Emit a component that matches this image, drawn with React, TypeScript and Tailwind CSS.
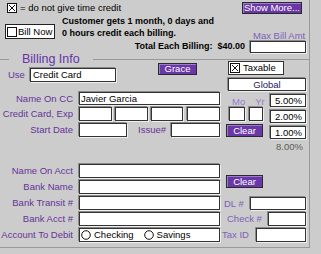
import type { ReactNode } from 'react';

function XBox({ checked = true }: { checked?: boolean }) {
  return (
    <svg width="10" height="10" viewBox="0 0 10 10" className="shrink-0">
      <rect x="0.5" y="0.5" width="9" height="9" fill="white" stroke="#111" />
      {checked && <path d="M2 2L8 8M8 2L2 8" stroke="#111" strokeWidth="1" />}
    </svg>
  );
}

function Radio() {
  return (
    <svg width="10" height="10" viewBox="0 0 10 10" className="shrink-0">
      <circle cx="5" cy="5" r="4.3" fill="white" stroke="#111" strokeWidth="1" />
    </svg>
  );
}

// white inset field
function Box({ className = '', children }: { className?: string; children?: ReactNode }) {
  return (
    <div
      className={`flex shrink-0 items-center overflow-hidden whitespace-nowrap border border-[#333] bg-white shadow-[-1px_-1px_0_#8a8a8a,1px_1px_0_#eeeeee] ${className}`}
    >
      {children}
    </div>
  );
}

function Btn({ className = '', children }: { className?: string; children: ReactNode }) {
  return (
    <div
      className={`flex shrink-0 items-center justify-center border border-[#2a2a2a] bg-[#6a36a8] text-white shadow-[inset_1px_1px_0_#9a7ccc] ${className}`}
    >
      {children}
    </div>
  );
}

function Row({ label, children, className = '' }: { label: string; children: ReactNode; className?: string }) {
  return (
    <div className={`flex h-[14px] items-center ${className}`}>
      <span className="w-[73px] shrink-0 whitespace-nowrap text-right text-[#663399]">{label}</span>
      <div className="ml-[6px] flex h-full items-center">{children}</div>
    </div>
  );
}

export default function App() {
  return (
    <div className="h-[254px] w-[321px] overflow-hidden bg-[#cccccc] font-['Liberation_Sans',Arial,sans-serif] text-[9.5px] leading-[12px] text-black">
      <div className="h-[248px] w-[310px] border-r border-b border-[#999]">
        {/* Top */}
        <div className="h-[52px]">
          <div className="flex h-[15px] items-start justify-between">
            <div className="ml-[7px] mt-[2px] flex h-[12px] items-center">
              <XBox />
              <span className="ml-[3px] whitespace-nowrap">= do not give time credit</span>
            </div>
            <Btn className="mr-[7px] mt-[2px] h-[12px] w-[60px]">Show More...</Btn>
          </div>
          <div className="flex">
            <div className="w-[248px]">
              <div className="flex">
                <div className="ml-[5px] mt-[9px] flex h-[15px] w-[50px] items-center border border-[#222] bg-white pl-[1px]">
                  <XBox checked={false} />
                  <span className="ml-[1px] whitespace-nowrap">Bill Now</span>
                </div>
                <div className="ml-[7px] whitespace-nowrap text-[9px] font-bold leading-[12px]">
                  Customer gets 1 month, 0 days and
                  <br />0 hours credit each billing.
                </div>
              </div>
              <div className="mt-[1px] whitespace-nowrap pr-[3px] text-right text-[9px] font-bold leading-[12px]">
                Total Each Billing:&nbsp; $40.00
              </div>
            </div>
            <div className="w-[61px]">
              <div className="ml-[5px] mt-[15px] whitespace-nowrap leading-[11px] text-[#8060b8]">Max Bill Amt</div>
              <Box className="ml-[2px] h-[12px] w-[56px]" />
            </div>
          </div>
        </div>

        {/* Billing Info header */}
        <div className="flex h-[14px] items-center">
          <div className="w-[9px] border-t border-[#999]" />
          <span className="mx-[13px] whitespace-nowrap text-[12.5px] leading-[14px] text-[#6633aa]">Billing Info</span>
          <div className="flex-1 border-t border-[#999]" />
        </div>

        <div className="-mt-[5px] flex">
          {/* Left column */}
          <div className="w-[222px]">
            <div className="flex h-[21px] items-start">
              <div className="mt-[7px] flex h-[14px] items-center">
                <span className="ml-[8px] w-[22px] text-[#663399]">Use</span>
                <Box className="h-[14px] w-[86px] pl-[2px]">Credit Card</Box>
              </div>
              <Btn className="ml-[42px] mt-[2px] h-[12px] w-[39px]">Grace</Btn>
            </div>

            <Row label="Name On CC" className="mt-[10px] !h-[13px]">
              <Box className="h-[13px] w-[141px] pl-[1px]">Javier Garcia</Box>
            </Row>
            <Row label="Credit Card, Exp" className="mt-[2px]">
              <Box className="h-[14px] w-[33px]" />
              <Box className="ml-[3px] h-[14px] w-[33px]" />
              <Box className="ml-[3px] h-[14px] w-[32px]" />
              <Box className="ml-[4px] h-[14px] w-[33px]" />
            </Row>
            <Row label="Start Date" className="mt-[2px]">
              <Box className="h-[14px] w-[48px]" />
              <span className="ml-[11px] w-[33px] text-[#663399]">Issue#</span>
              <Box className="h-[14px] w-[49px]" />
            </Row>

            <Row label="Name On Acct" className="mt-[27px]">
              <Box className="h-[14px] w-[141px]" />
            </Row>
            <Row label="Bank Name" className="mt-[2px]">
              <Box className="h-[14px] w-[141px]" />
            </Row>
            <Row label="Bank Transit #" className="mt-[2px]">
              <Box className="h-[14px] w-[141px]" />
            </Row>
            <Row label="Bank Acct #" className="mt-[2px]">
              <Box className="h-[14px] w-[141px]" />
            </Row>
            <Row label="Account To Debit" className="mt-[2px]">
              <Box className="h-[14px] w-[141px] pl-[1px]">
                <Radio />
                <span className="ml-[3px]">Checking</span>
                <span className="ml-[10px] flex items-center">
                  <Radio />
                  <span className="ml-[3px]">Savings</span>
                </span>
              </Box>
            </Row>
          </div>

          {/* Right column */}
          <div className="w-[87px]">
            <div className="ml-[6px] flex h-[14px] w-[56px] items-center border border-[#333] bg-white pl-[1px]">
              <XBox />
              <span className="ml-[3px]">Taxable</span>
            </div>
            <Box className="ml-[6px] mt-[3px] h-[13px] w-[78px] justify-center text-[#1c1c5a]">Global</Box>

            <div className="mt-[3px] flex h-[59px]">
              <div className="w-[48px]">
                <div className="flex h-[13px] pt-[2px] leading-[11px] text-[#9a7acc]">
                  <span className="ml-[10px]">Mo</span>
                  <span className="ml-[10px]">Yr</span>
                </div>
                <div className="flex h-[14px]">
                  <Box className="ml-[7px] h-[14px] w-[16px]" />
                  <Box className="ml-[4px] h-[14px] w-[14px]" />
                </div>
                <Btn className="ml-[4px] mt-[3px] h-[13px] w-[37px]">Clear</Btn>
              </div>
              <div className="w-[36px]">
                <Box className="h-[13px] w-[36px] justify-end pr-[3px]">5.00%</Box>
                <Box className="mt-[3px] h-[13px] w-[36px] justify-end pr-[3px]">2.00%</Box>
                <Box className="mt-[3px] h-[13px] w-[36px] justify-end pr-[3px]">1.00%</Box>
                <div className="mt-[2px] pr-[3px] text-right leading-[11px] text-[#5c5c5c]">8.00%</div>
              </div>
            </div>

            <Btn className="ml-[4px] mt-[22px] h-[13px] w-[37px]">Clear</Btn>

            <div className="mt-[9px] flex h-[13px] items-center">
              <span className="ml-[2px] w-[26px] text-[#8060b8]">DL #</span>
              <Box className="h-[13px] w-[56px]" />
            </div>
            <div className="mt-[2px] flex h-[14px] items-center">
              <span className="ml-[5px] w-[41px] text-[#8060b8]">Check #</span>
              <Box className="h-[14px] w-[38px]" />
            </div>
            <div className="mt-[2px] flex h-[14px] items-center">
              <span className="w-[34px] text-[#8060b8]">Tax ID</span>
              <Box className="h-[14px] w-[50px]" />
            </div>
          </div>
        </div>
      </div>
    </div>
  );
}
